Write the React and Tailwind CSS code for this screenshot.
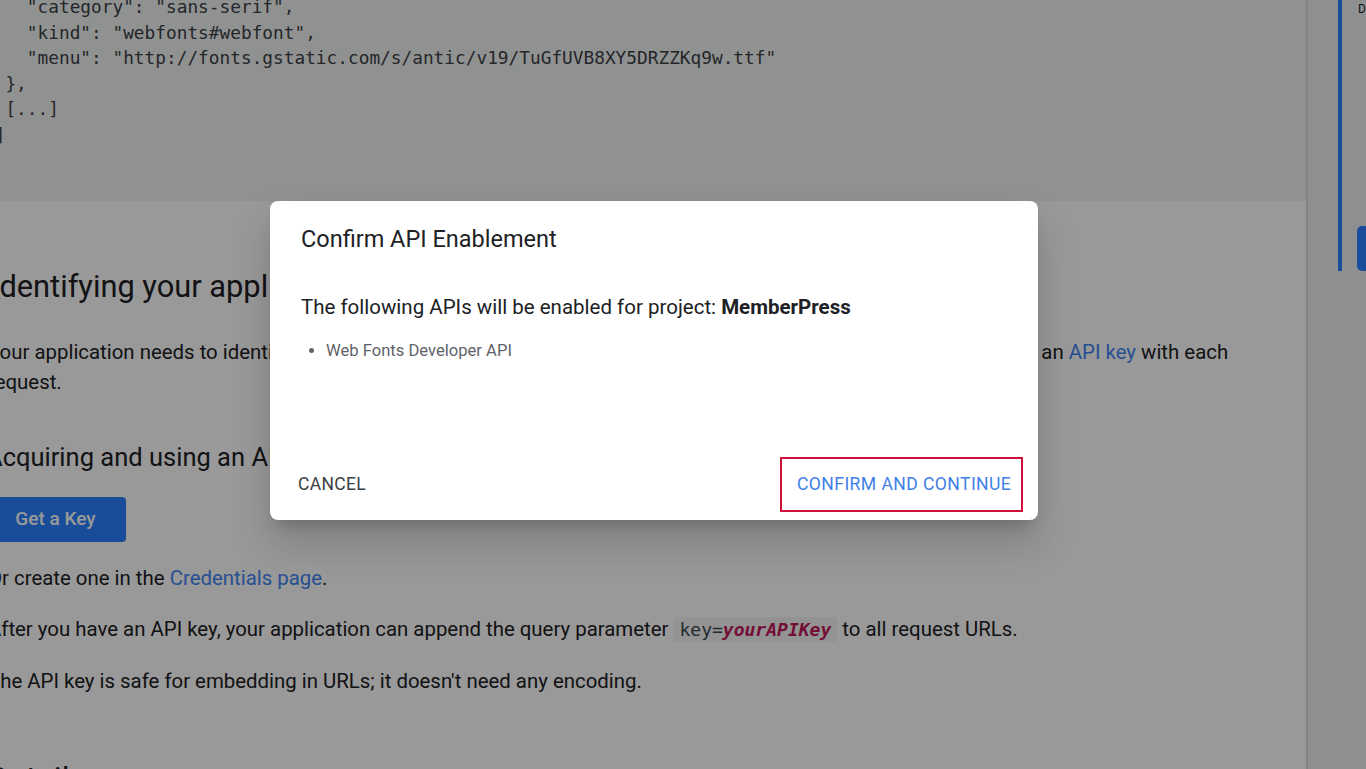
export default function App() {
  const mono = { fontFamily: '"DejaVu Sans Mono", "Liberation Mono", monospace' };
  return (
    <div className="relative w-full h-[769px] overflow-hidden flex bg-white" style={{ fontFamily: 'Roboto, "Noto Sans", sans-serif' }}>
      {/* main column */}
      <div className="flex-1 flex flex-col min-w-0">
        {/* code block */}
        <div className="h-[201px] shrink-0 bg-[#f1f3f4] overflow-hidden">
          <pre className="mt-[-6px] ml-[-16px] text-[17.8px] leading-[25.6px] text-[#3c4043]" style={mono}>
{`    "category": "sans-serif",
    "kind": "webfonts#webfont",
    "menu": "http://fonts.gstatic.com/s/antic/v19/TuGfUVB8XY5DRZZKq9w.ttf"
  },
  [...]
 ]`}
          </pre>
        </div>
        {/* article */}
        <div className="flex-1 ml-[-12px] text-[#202124]">
          <h1 className="ml-[3px] mt-[68px] text-[30.8px] leading-[36px] font-normal">Identifying your application to Google</h1>
          <p className="mt-[32px] text-[20.4px] leading-[30px] whitespace-nowrap">
            Your application needs to identify itself every time it sends a request to the Google Fonts Developer API, by including an <span className="text-[#4285f4]">API key</span> with each
            <br />
            request.
          </p>
          <h2 className="ml-[-2px] mt-[44px] text-[25.5px] leading-[32px] font-normal">Acquiring and using an API key</h2>
          <button className="ml-[3px] mt-[24px] h-[45px] w-[135px] rounded-[4px] bg-[#2a80ff] text-white text-[19px] font-medium pr-[6px]">
            Get a Key
          </button>
          <p className="mt-[21px] text-[20.4px] leading-[30px]">
            Or create one in the <span className="text-[#4285f4]">Credentials page</span>.
          </p>
          <p className="mt-[21px] text-[20.4px] leading-[30px] whitespace-nowrap">
            After you have an API key, your application can append the query parameter{' '}
            <code className="bg-[#f5f5f5] px-[6px] py-[2px] rounded-[3px] text-[18px] text-[#37474f]" style={mono}>
              key=<i className="text-[#c2185b] font-bold">yourAPIKey</i>
            </code>{' '}
            to all request URLs.
          </p>
          <p className="mt-[21px] text-[20.4px] leading-[30px]">
            The API key is safe for embedding in URLs; it doesn't need any encoding.
          </p>
          <h2 className="mt-[64px] text-[32px] leading-[36px] font-normal">Details</h2>
        </div>
      </div>
      {/* right sidebar */}
      <div className="w-[60px] shrink-0 bg-[#eceef1] border-l-2 border-[#dcdcdc] flex">
        <div className="w-[30px] shrink-0" />
        <div className="w-[4px] h-[271px] bg-[#2a80ff] shrink-0" />
        <div className="flex-1 flex flex-col h-[271px]">
          <span className="ml-[16px] mt-[2px] text-[12px] leading-[14px] text-[#202124]">D</span>
          <div className="mt-auto ml-[15px] h-[45px] rounded-l-[5px] bg-[#2a80ff]" />
        </div>
      </div>

      {/* scrim */}
      <div className="absolute inset-0 bg-black/40" />

      {/* dialog */}
      <div className="absolute left-[270px] top-[201px] w-[768px] h-[319px] bg-white rounded-[8px] shadow-[0_11px_15px_-7px_rgba(0,0,0,0.2),0_24px_38px_3px_rgba(0,0,0,0.14)] flex flex-col">
        <div className="pl-[31px] pt-[24px] text-[23.5px] leading-[28px] text-[#202124]">Confirm API Enablement</div>
        <div className="pl-[31px] mt-[40px] text-[20.5px] leading-[28px] text-[#202124]">
          The following APIs will be enabled for project: <span className="font-bold">MemberPress</span>
        </div>
        <ul className="mt-[19px] pl-[56px] list-disc text-[16.6px] leading-[22px] text-[#5f6368]">
          <li>Web Fonts Developer API</li>
        </ul>
        <div className="mt-auto mb-[8px] flex items-center justify-between pl-[28px] pr-[15px]">
          <span className="text-[17.5px] tracking-[0.3px] text-[#3c4043]">CANCEL</span>
          <div className="h-[55px] w-[243px] border-2 border-[#d1103a] flex items-center pl-[15px]">
            <span className="text-[17.6px] tracking-[0.4px] text-[#3f7fe6]">CONFIRM AND CONTINUE</span>
          </div>
        </div>
      </div>
    </div>
  );
}
